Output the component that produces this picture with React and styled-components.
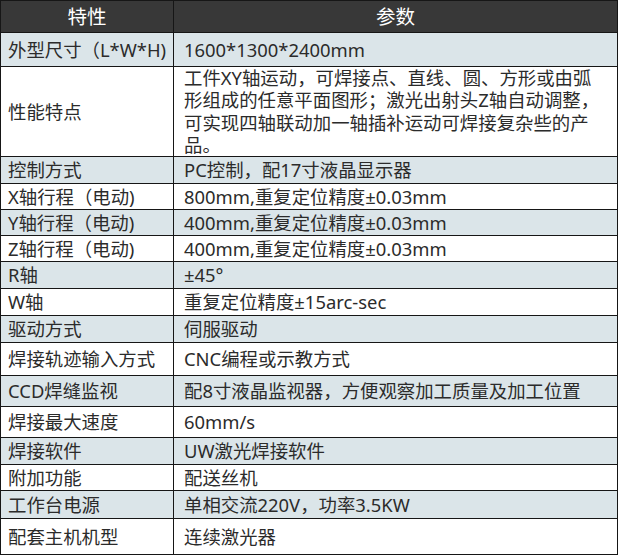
import React from "react";
import styled, { createGlobalStyle } from "styled-components";

const Global = createGlobalStyle`
  html, body { margin: 0; padding: 0; background: #ffffff; }
  body { font-family: "Noto Sans", "Noto Sans CJK SC", sans-serif; }
`;

const rows = [
  { k: "外型尺寸（L*W*H)", v: "1600*1300*2400mm", h: 34 },
  {
    k: "性能特点",
    v: "工件XY轴运动，可焊接点、直线、圆、方形或由弧形组成的任意平面图形；激光出射头Z轴自动调整，可实现四轴联动加一轴插补运动可焊接复杂些的产品。",
    h: 90,
    multi: true,
  },
  { k: "控制方式", v: "PC控制，配17寸液晶显示器", h: 27 },
  { k: "X轴行程（电动)", v: "800mm,重复定位精度±0.03mm", h: 26 },
  { k: "Y轴行程（电动)", v: "400mm,重复定位精度±0.03mm", h: 26 },
  { k: "Z轴行程（电动)", v: "400mm,重复定位精度±0.03mm", h: 26 },
  { k: "R轴", v: "±45°", h: 27 },
  { k: "W轴", v: "重复定位精度±15arc-sec", h: 27 },
  { k: "驱动方式", v: "伺服驱动", h: 27 },
  { k: "焊接轨迹输入方式", v: "CNC编程或示教方式", h: 33 },
  { k: "CCD焊缝监视", v: "配8寸液晶监视器，方便观察加工质量及加工位置", h: 31 },
  { k: "焊接最大速度", v: "60mm/s", h: 31 },
  { k: "焊接软件", v: "UW激光焊接软件", h: 27 },
  { k: "附加功能", v: "配送丝机", h: 26 },
  { k: "工作台电源", v: "单相交流220V，功率3.5KW", h: 28 },
  { k: "配套主机机型", v: "连续激光器", h: 36 },
];

const Table = styled.div`
  display: grid;
  grid-template-columns: 173px 444px;
  width: 618px;
  box-sizing: border-box;
  border-top: 1px solid #161616;
  border-left: 1px solid #161616;
  color: #2b2b2b;
`;

const HeadCell = styled.div`
  box-sizing: border-box;
  height: 32px;
  background: #383838;
  color: #ffffff;
  font-size: 19.5px;
  line-height: 31px;
  text-align: center;
  border-right: 1px solid #161616;
  border-bottom: 1px solid #161616;
`;

const Cell = styled.div`
  box-sizing: border-box;
  display: flex;
  align-items: ${(p) => (p.$multi ? "flex-start" : "center")};
  height: ${(p) => p.$h}px;
  overflow: hidden;
  background: ${(p) => (p.$shaded ? "#dbe5e9" : "#ffffff")};
  border-right: 1px solid #161616;
  border-bottom: 1px solid #161616;
  padding: ${(p) => (p.$multi ? "0 12px 0 10px" : "0 8px 0 10px")};
  font-size: 18.4px;
  line-height: ${(p) => (p.$multi ? "22.25px" : "22px")};
  white-space: ${(p) => (p.$multi ? "normal" : "nowrap")};
`;

const KeyCell = styled(Cell)`
  padding-left: 7px;
  align-items: center;
`;

const Text = styled.span`
  display: block;
`;

export default function App() {
  return (
    <>
      <Global />
      <Table>
        <HeadCell>特性</HeadCell>
        <HeadCell>参数</HeadCell>
        {rows.map((r, i) => (
          <React.Fragment key={i}>
            <KeyCell $h={r.h} $shaded={i % 2 === 0}>
              <Text>{r.k}</Text>
            </KeyCell>
            <Cell $h={r.h} $shaded={i % 2 === 0} $multi={r.multi}>
              <Text>{r.v}</Text>
            </Cell>
          </React.Fragment>
        ))}
      </Table>
    </>
  );
}
